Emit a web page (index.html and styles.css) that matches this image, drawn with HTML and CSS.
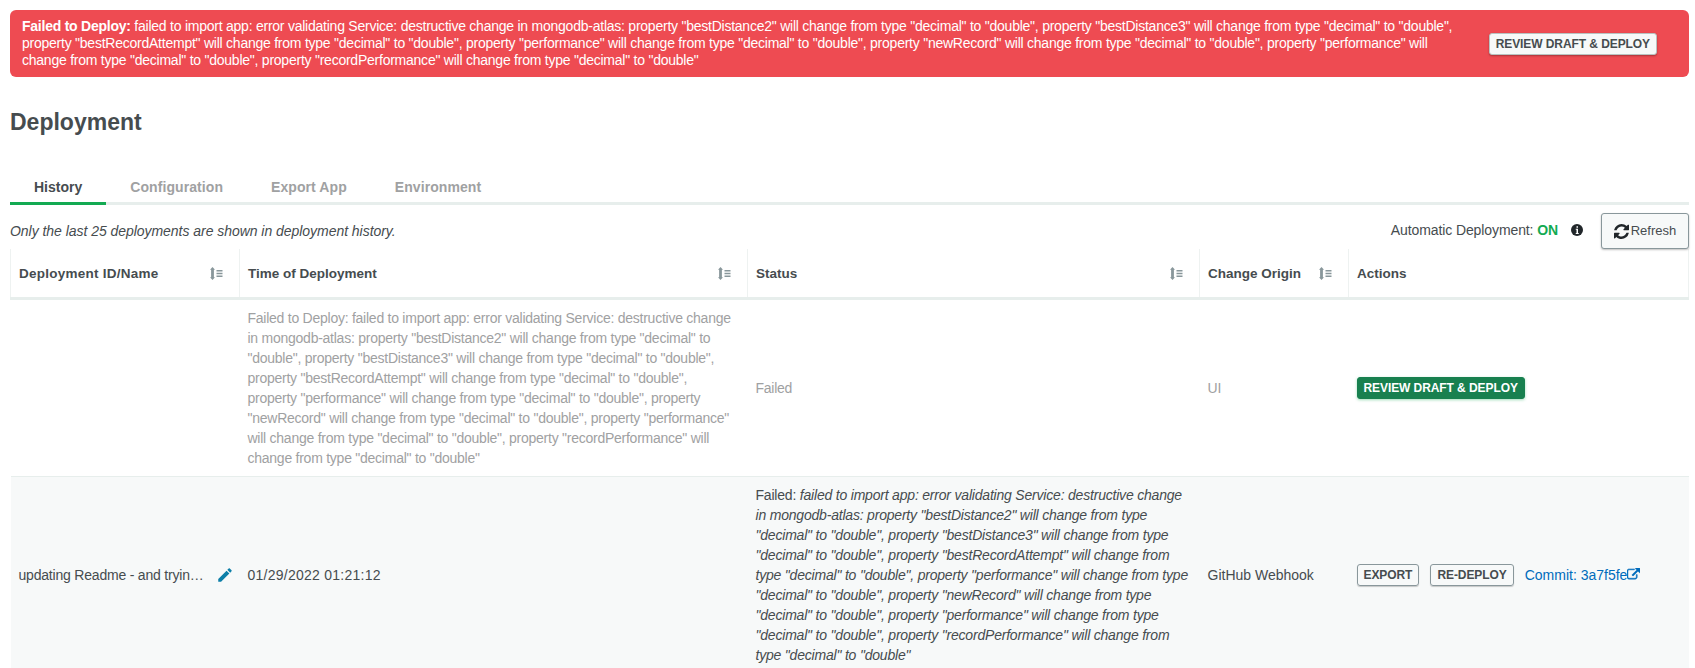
FILE: index.html
```html
<!DOCTYPE html>
<html lang="en">
<head>
<meta charset="utf-8">
<title>Deployment</title>
<link rel="stylesheet" href="styles.css">
</head>
<body>
<svg class="defs" width="0" height="0" aria-hidden="true">
  <symbol id="sort" viewBox="0 0 13 13">
    <path d="M2.500 0 L5 2.700 H3.900 V10.300 H5 L2.500 13 L0 10.300 H1.100 V2.700 H0 Z" fill="currentColor"/>
    <path d="M6.500 3h6v1.500h-6zM6.500 5.800h6v1.500h-6zM6.500 8.600h6v1.500h-6z" fill="currentColor"/>
  </symbol>
</svg>
<main class="page">
  <div class="banner">
    <p class="banner-text"><strong>Failed to Deploy:</strong> failed to import app: error validating Service: destructive change in mongodb-atlas: property "bestDistance2" will change from type "decimal" to "double", property "bestDistance3" will change from type "decimal" to "double", property "bestRecordAttempt" will change from type "decimal" to "double", property "performance" will change from type "decimal" to "double", property "newRecord" will change from type "decimal" to "double", property "performance" will change from type "decimal" to "double", property "recordPerformance" will change from type "decimal" to "double"</p>
    <button class="btn btn-light">REVIEW DRAFT &amp; DEPLOY</button>
  </div>
  <h1 class="title">Deployment</h1>
  <nav class="tabs">
    <a class="tab active">History</a>
    <a class="tab">Configuration</a>
    <a class="tab">Export App</a>
    <a class="tab">Environment</a>
  </nav>
  <div class="toolbar">
    <em class="note">Only the last 25 deployments are shown in deployment history.</em>
    <div class="auto">
      <span class="auto-label">Automatic Deployment: <b class="on">ON</b></span>
      <svg class="info" viewBox="0 0 24 24"><circle cx="12" cy="12" r="12" fill="currentColor"/><path d="M9.500 9.500h4.500v8.500h1.500v2h-6v-2H11v-6.500H9.500zM11 4.500h3v3h-3z" fill="#fff"/></svg>
      <button class="refresh">
        <svg class="refresh-icon" viewBox="128 128 1536 1536"><path d="M1639 1056q0 5-1 7-64 268-268 434.500t-478 166.500q-146 0-282.500-55t-243.500-157l-129 129q-19 19-45 19t-45-19-19-45v-448q0-26 19-45t45-19h448q26 0 45 19t19 45-19 45l-137 137q71 66 161 102t187 36q134 0 250-65t186-179q11-17 53-117 8-23 30-23h192q13 0 22.500 9.500t9.500 22.500zm25-800v448q0 26-19 45t-45 19h-448q-26 0-45-19t-19-45 19-45l138-138q-148-137-349-137-134 0-250 65t-186 179q-11 17-53 117-8 23-30 23h-199q-13 0-22.500-9.500t-9.500-22.500v-7q65-268 270-434.500t480-166.500q146 0 284 55.500t245 156.500l130-129q19-19 45-19t45 19 19 45z" fill="currentColor"/></svg>Refresh
      </button>
    </div>
  </div>
  <table class="grid">
    <colgroup>
      <col class="c1"><col class="c2"><col class="c3"><col class="c4"><col class="c5">
    </colgroup>
    <thead>
      <tr>
        <th><div class="th"><span class="th-wide">Deployment ID/Name</span><svg class="sort"><use href="#sort"/></svg></div></th>
        <th><div class="th"><span>Time of Deployment</span><svg class="sort"><use href="#sort"/></svg></div></th>
        <th><div class="th"><span>Status</span><svg class="sort"><use href="#sort"/></svg></div></th>
        <th><div class="th"><span>Change Origin</span><svg class="sort"><use href="#sort"/></svg></div></th>
        <th><div class="th"><span>Actions</span></div></th>
      </tr>
    </thead>
    <tbody>
      <tr class="muted">
        <td></td>
        <td class="msg">Failed to Deploy: failed to import app: error validating Service: destructive change in mongodb-atlas: property "bestDistance2" will change from type "decimal" to "double", property "bestDistance3" will change from type "decimal" to "double", property "bestRecordAttempt" will change from type "decimal" to "double", property "performance" will change from type "decimal" to "double", property "newRecord" will change from type "decimal" to "double", property "performance" will change from type "decimal" to "double", property "recordPerformance" will change from type "decimal" to "double"</td>
        <td class="msg">Failed</td>
        <td>UI</td>
        <td><button class="btn btn-green">REVIEW DRAFT &amp; DEPLOY</button></td>
      </tr>
      <tr class="shaded">
        <td class="msg"><div class="name"><span class="name-text">updating Readme - and tryin…</span><svg class="pencil" viewBox="0 0 24 24"><path d="M3 17.250V21h3.750L17.810 9.940l-3.750-3.750L3 17.250zM20.710 7.040c.39-.39.39-1.020 0-1.410l-2.340-2.340c-.39-.39-1.020-.39-1.410 0l-1.830 1.830 3.750 3.750 1.830-1.830z" fill="currentColor"/></svg></div></td>
        <td class="date">01/29/2022 01:21:12</td>
        <td class="msg">Failed: <i>failed to import app: error validating Service: destructive change in mongodb-atlas: property "bestDistance2" will change from type "decimal" to "double", property "bestDistance3" will change from type "decimal" to "double", property "bestRecordAttempt" will change from type "decimal" to "double", property "performance" will change from type "decimal" to "double", property "newRecord" will change from type "decimal" to "double", property "performance" will change from type "decimal" to "double", property "recordPerformance" will change from type "decimal" to "double"</i></td>
        <td>GitHub Webhook</td>
        <td><div class="actions"><button class="btn btn-outline">EXPORT</button><button class="btn btn-outline">RE-DEPLOY</button><a class="commit">Commit: 3a7f5fe<svg class="ext" viewBox="0 0 1792 1792"><path d="M1408 928v320q0 119-84.500 203.500t-203.500 84.500h-832q-119 0-203.500-84.500t-84.500-203.500v-832q0-119 84.500-203.500t203.500-84.500h704q14 0 23 9t9 23v64q0 14-9 23t-23 9h-704q-66 0-113 47t-47 113v832q0 66 47 113t113 47h832q66 0 113-47t47-113v-320q0-14 9-23t23-9h64q14 0 23 9t9 23zm384-864v512q0 26-19 45t-45 19-45-19l-176-176-652 652q-10 10-23 10t-23-10l-114-114q-10-10-10-23t10-23l652-652-176-176q-19-19-19-45t19-45 45-19h512q26 0 45 19t19 45z" fill="currentColor" stroke="currentColor" stroke-width="70"/></svg></a></div></td>
      </tr>
    </tbody>
  </table>
</main>
</body>
</html>
```

FILE: styles.css
```css
* { box-sizing: border-box; }
html, body { height: 100%; overflow: hidden; }
body {
  margin: 0;
  background: #fff;
  color: #464c4f;
  font-family: "Liberation Sans", Arial, sans-serif;
  font-size: 14px;
  line-height: 20px;
}
.defs { position: absolute; }
.page { padding: 10px 6px 0 10px; }

.banner {
  display: flex;
  align-items: center;
  height: 67px;
  padding: 0 32px 0 12px;
  background: #ee4b52;
  border-radius: 6px;
  color: #fff;
}
.banner-text {
  flex: 1;
  margin: 0;
  padding-right: 23px;
  line-height: 17px;
  letter-spacing: -.24px;
}
.title {
  margin: 30px 0 0;
  font-size: 23px;
  line-height: 30px;
  font-weight: 700;
}

.tabs {
  display: flex;
  margin-top: 36px;
  border-bottom: 3px solid #e7eeec;
}
.tab {
  height: 32px;
  margin-bottom: -3px;
  padding: 0 24px;
  border-bottom: 3px solid transparent;
  color: #9fa1a2;
  font-weight: 700;
  line-height: 28px;
  letter-spacing: .08px;
}
.tab.active { color: #464c4f; border-bottom-color: #13aa52; letter-spacing: 0; }

.toolbar {
  display: flex;
  justify-content: space-between;
  align-items: flex-start;
  height: 36px;
  margin-top: 8px;
}
.note { padding-top: 8px; letter-spacing: -.04px; }
.auto { display: flex; align-items: flex-start; }
.auto-label { padding-top: 7px; letter-spacing: -.1px; }
.on { color: #13aa52; }
.info { width: 12px; height: 12px; margin: 11px 0 0 13px; color: #21262a; }
.refresh {
  display: flex;
  align-items: center;
  justify-content: center;
  width: 88px;
  height: 36px;
  margin-left: 18px;
  padding: 0;
  background: #f7f9f9;
  border: 1px solid #89979b;
  border-radius: 3px;
  box-shadow: 0 1px 2px rgba(0, 0, 0, .25);
  color: #464c4f;
  font-family: inherit;
  font-size: 13px;
  line-height: 20px;
}
.refresh-icon { width: 15px; height: 15px; margin-right: 2px; color: #21262a; }

.grid {
  width: 100%;
  table-layout: fixed;
  border-collapse: collapse;
}
.c1 { width: 229px; }
.c2 { width: 508px; }
.c3 { width: 452px; }
.c4 { width: 149px; }
.grid th {
  height: 49px;
  padding: 2px 8px 0;
  border-left: 1px solid #eef2f1;
  border-bottom: 3px solid #e7eeec;
  color: #464c4f;
  font-size: 13.500px;
  font-weight: 700;
  text-align: left;
}
.grid th:last-child { border-right: 1px solid #eef2f1; }
.th { display: flex; justify-content: space-between; align-items: center; }
.th-wide { letter-spacing: .25px; }
.sort { width: 13px; height: 13px; margin-right: 8px; color: #89979b; }
.grid td {
  padding: 8px;
  border-bottom: 1px solid #e7eeec;
  vertical-align: middle;
}
.grid .msg { letter-spacing: -.2px; }
.grid .date { letter-spacing: .25px; }
.muted .msg { letter-spacing: -.25px; }
.muted td { color: #9fa1a2; }
.shaded td { background: #f7f9f9; }

.name { display: flex; align-items: center; gap: 12px; }
.name-text { white-space: nowrap; }
.pencil { flex: none; width: 18px; height: 18px; color: #0d7fa8; }

.btn {
  height: 22px;
  padding: 0 6px;
  border-radius: 3px;
  font-family: inherit;
  font-size: 12px;
  font-weight: 700;
  line-height: 20px;
  letter-spacing: -.08px;
}
.btn-light {
  flex: none;
  background: #f7f9f9;
  border: 1px solid #b8c4c2;
  box-shadow: 0 1px 2px rgba(0, 0, 0, .3);
  color: #464c4f;
}
.btn-green {
  background: #18804f;
  border: 1px solid #18804f;
  box-shadow: 0 1px 3px rgba(19, 170, 82, .4);
  color: #fff;
}
.btn-outline {
  background: transparent;
  border: 1px solid #89979b;
  box-shadow: 0 1px 1px rgba(0, 0, 0, .2);
  color: #464c4f;
}
.actions { display: flex; align-items: center; gap: 11px; }
.commit { display: flex; align-items: center; color: #006cbc; white-space: nowrap; }
.ext { width: 13px; height: 13px; }
```
